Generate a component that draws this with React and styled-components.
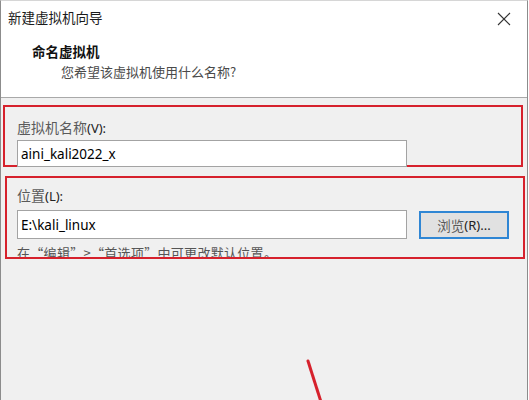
import React from 'react'
import styled, { createGlobalStyle } from 'styled-components';

const GlobalStyle = createGlobalStyle`
    html, body {
        margin:0;
        padding:0;
        background:#ffffff;
    }
    body {
        font-family:"Noto Sans", "Noto Sans CJK SC", sans-serif;
    }
`;

const Window = styled.div`
    position:relative;
    width:528px;
    height:400px;
    box-sizing:border-box;
    border-left:1px solid #8c8c8c;
    border-right:1px solid #8c8c8c;
    border-top:1px solid #d6d6d6;
    background:#f0f0f0;
    overflow:hidden;
`;

const TitleBar = styled.div`
    height:33px;
    background:#ffffff;
    display:flex;
    align-items:center;
    justify-content:space-between;
    padding:0 16px 0 7px;
`;

const TitleText = styled.div`
    font-family:"Noto Sans CJK SC", sans-serif;
    font-size:13.5px;
    color:#1a1a1a;
    margin-top:-1px;
`;

const CloseButton = styled.div`
    width:14px;
    height:14px;
    display:flex;
    margin-top:2px;
`;

const Header = styled.div`
    height:64px;
    box-sizing:border-box;
    background:#ffffff;
    border-bottom:1px solid #a9a9a9;
    padding:9px 0 0 31px;
`;

const HeaderTitle = styled.div`
    font-family:"Noto Sans CJK SC", sans-serif;
    font-weight:700;
    font-size:13.5px;
    line-height:17px;
    color:#111111;
`;

const HeaderSub = styled.div`
    font-family:"Noto Sans CJK SC", sans-serif;
    font-size:13px;
    line-height:17px;
    color:#4a4a4a;
    margin:3px 0 0 29px;
`;

const Body = styled.div`
    display:flex;
    flex-direction:column;
    padding-top:7px;
`;

const MarkBox = styled.section`
    box-sizing:border-box;
    width:520px;
    height:${props=>props.h}px;
    margin-left:${props=>props.left}px;
    margin-top:${props=>props.top}px;
    border:2px solid #d6212c;
    padding:${props=>props.pt}px 0 0 ${props=>props.pl}px;
    overflow:${props=>props.clip?'hidden':'visible'};
`;

const Label = styled.div`
    font-size:13px;
    line-height:16px;
    color:#222222;
    margin-bottom:${props=>props.gap}px;

    span {
        font-family:"Noto Sans CJK SC", sans-serif;
        font-size:14px;
        color:#5a5a5a;
    }
`;

const Row = styled.div`
    display:flex;
    align-items:flex-start;
    gap:12px;
`;

const TextField = styled.div`
    box-sizing:border-box;
    width:390px;
    height:${props=>props.h}px;
    background:#ffffff;
    border:1px solid #a3a3a3;
    padding-left:3px;
    display:flex;
    align-items:center;
    font-size:13.5px;
    color:#000000;
`;

const BrowseButton = styled.div`
    box-sizing:border-box;
    width:90px;
    height:28px;
    margin-top:1px;
    background:#e1e1e1;
    border:2px solid #2f86d4;
    display:flex;
    align-items:center;
    justify-content:center;
    font-size:13px;
    color:#222222;

    span {
        font-family:"Noto Sans CJK SC", sans-serif;
        font-size:13.5px;
        color:#5a5a5a;
    }
`;

const Hint = styled.div`
    font-family:"Noto Sans CJK SC", sans-serif;
    font-size:13px;
    letter-spacing:0.3px;
    line-height:16px;
    color:#555555;
    margin-top:6px;
    white-space:nowrap;
`;

const Arrow = styled.svg`
    position:absolute;
    left:0;
    top:0;
    pointer-events:none;
`;

const App = () => {
    return(
        <>
            <GlobalStyle/>
            <Window>
                <TitleBar>
                    <TitleText>新建虚拟机向导</TitleText>
                    <CloseButton>
                        <svg width="14" height="14" viewBox="0 0 14 14">
                            <path d="M1 1 L13 13 M13 1 L1 13" stroke="#333333" strokeWidth="1.1" fill="none"/>
                        </svg>
                    </CloseButton>
                </TitleBar>
                <Header>
                    <HeaderTitle>命名虚拟机</HeaderTitle>
                    <HeaderSub>您希望该虚拟机使用什么名称?</HeaderSub>
                </Header>
                <Body>
                    <MarkBox h={62} left={2} top={0} pt={12} pl={12}>
                        <Label gap={4}><span>虚拟机名称</span>(V):</Label>
                        <TextField h={27}>aini_kali2022_x</TextField>
                    </MarkBox>
                    <MarkBox h={83} left={4} top={9} pt={9} pl={10} clip>
                        <Label gap={6}><span>位置</span>(L):</Label>
                        <Row>
                            <TextField h={29}>E:\kali_linux</TextField>
                            <BrowseButton><span>浏览</span>(R)...</BrowseButton>
                        </Row>
                        <Hint>在“编辑”&gt;“首选项”中可更改默认位置。</Hint>
                    </MarkBox>
                </Body>
                <Arrow width="528" height="400">
                    <line x1="307" y1="360" x2="321" y2="404" stroke="#d6212c" strokeWidth="3" strokeLinecap="round"/>
                </Arrow>
            </Window>
        </>
    );
}

export default App;
